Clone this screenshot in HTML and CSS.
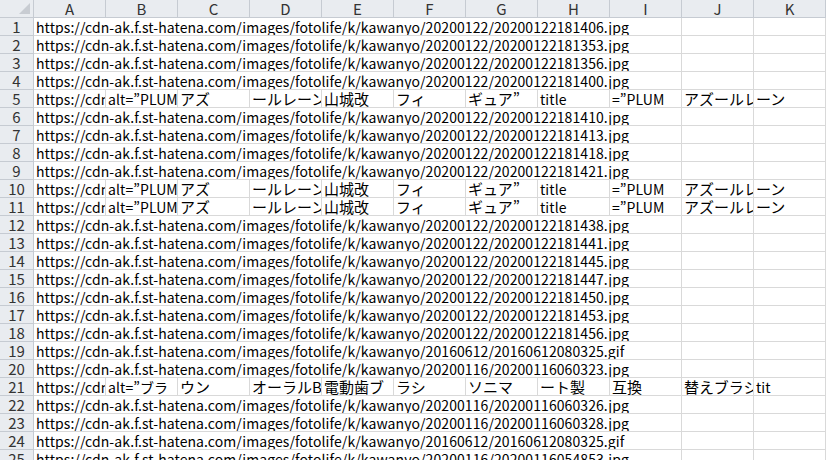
FILE: index.html
```html
<!DOCTYPE html>
<html lang="ja">
<head>
<meta charset="utf-8">
<title>Sheet</title>
<link rel="stylesheet" href="styles.css">
</head>
<body>
<div class="sheet">
  <div class="hd corner"><span class="tri"></span></div>
  <div class="hd col">A</div><div class="hd col">B</div><div class="hd col">C</div><div class="hd col">D</div><div class="hd col">E</div><div class="hd col">F</div><div class="hd col">G</div><div class="hd col">H</div><div class="hd col">I</div><div class="hd col">J</div><div class="hd col">K</div>

  <div class="hd rn">1</div><div class="c url">https://cdn-ak.f.st-hatena.com/images/fotolife/k/kawanyo/20200122/20200122181406.jpg</div><div class="c"></div><div class="c"></div>
  <div class="hd rn">2</div><div class="c url">https://cdn-ak.f.st-hatena.com/images/fotolife/k/kawanyo/20200122/20200122181353.jpg</div><div class="c"></div><div class="c"></div>
  <div class="hd rn">3</div><div class="c url">https://cdn-ak.f.st-hatena.com/images/fotolife/k/kawanyo/20200122/20200122181356.jpg</div><div class="c"></div><div class="c"></div>
  <div class="hd rn">4</div><div class="c url">https://cdn-ak.f.st-hatena.com/images/fotolife/k/kawanyo/20200122/20200122181400.jpg</div><div class="c"></div><div class="c"></div>
  <div class="hd rn">5</div><div class="c">https://cdn-ak.f.st-hatena.com/</div><div class="c">alt=”PLUM</div><div class="c jp">アズ</div><div class="c jp">ールレーン</div><div class="c jp">山城改</div><div class="c jp">フィ</div><div class="c jp">ギュア”</div><div class="c">title</div><div class="c">=”PLUM</div><div class="c jp">アズールレ</div><div class="c jp">ーン</div>
  <div class="hd rn">6</div><div class="c url">https://cdn-ak.f.st-hatena.com/images/fotolife/k/kawanyo/20200122/20200122181410.jpg</div><div class="c"></div><div class="c"></div>
  <div class="hd rn">7</div><div class="c url">https://cdn-ak.f.st-hatena.com/images/fotolife/k/kawanyo/20200122/20200122181413.jpg</div><div class="c"></div><div class="c"></div>
  <div class="hd rn">8</div><div class="c url">https://cdn-ak.f.st-hatena.com/images/fotolife/k/kawanyo/20200122/20200122181418.jpg</div><div class="c"></div><div class="c"></div>
  <div class="hd rn">9</div><div class="c url">https://cdn-ak.f.st-hatena.com/images/fotolife/k/kawanyo/20200122/20200122181421.jpg</div><div class="c"></div><div class="c"></div>
  <div class="hd rn">10</div><div class="c">https://cdn-ak.f.st-hatena.com/</div><div class="c">alt=”PLUM</div><div class="c jp">アズ</div><div class="c jp">ールレーン</div><div class="c jp">山城改</div><div class="c jp">フィ</div><div class="c jp">ギュア”</div><div class="c">title</div><div class="c">=”PLUM</div><div class="c jp">アズールレ</div><div class="c jp">ーン</div>
  <div class="hd rn">11</div><div class="c">https://cdn-ak.f.st-hatena.com/</div><div class="c">alt=”PLUM</div><div class="c jp">アズ</div><div class="c jp">ールレーン</div><div class="c jp">山城改</div><div class="c jp">フィ</div><div class="c jp">ギュア”</div><div class="c">title</div><div class="c">=”PLUM</div><div class="c jp">アズールレ</div><div class="c jp">ーン</div>
  <div class="hd rn">12</div><div class="c url">https://cdn-ak.f.st-hatena.com/images/fotolife/k/kawanyo/20200122/20200122181438.jpg</div><div class="c"></div><div class="c"></div>
  <div class="hd rn">13</div><div class="c url">https://cdn-ak.f.st-hatena.com/images/fotolife/k/kawanyo/20200122/20200122181441.jpg</div><div class="c"></div><div class="c"></div>
  <div class="hd rn">14</div><div class="c url">https://cdn-ak.f.st-hatena.com/images/fotolife/k/kawanyo/20200122/20200122181445.jpg</div><div class="c"></div><div class="c"></div>
  <div class="hd rn">15</div><div class="c url">https://cdn-ak.f.st-hatena.com/images/fotolife/k/kawanyo/20200122/20200122181447.jpg</div><div class="c"></div><div class="c"></div>
  <div class="hd rn">16</div><div class="c url">https://cdn-ak.f.st-hatena.com/images/fotolife/k/kawanyo/20200122/20200122181450.jpg</div><div class="c"></div><div class="c"></div>
  <div class="hd rn">17</div><div class="c url">https://cdn-ak.f.st-hatena.com/images/fotolife/k/kawanyo/20200122/20200122181453.jpg</div><div class="c"></div><div class="c"></div>
  <div class="hd rn">18</div><div class="c url">https://cdn-ak.f.st-hatena.com/images/fotolife/k/kawanyo/20200122/20200122181456.jpg</div><div class="c"></div><div class="c"></div>
  <div class="hd rn">19</div><div class="c url">https://cdn-ak.f.st-hatena.com/images/fotolife/k/kawanyo/20160612/20160612080325.gif</div><div class="c"></div><div class="c"></div>
  <div class="hd rn">20</div><div class="c url">https://cdn-ak.f.st-hatena.com/images/fotolife/k/kawanyo/20200116/20200116060323.jpg</div><div class="c"></div><div class="c"></div>
  <div class="hd rn">21</div><div class="c">https://cdn-ak.f.st-hatena.com/</div><div class="c">alt=”ブラ</div><div class="c jp">ウン</div><div class="c jp">オーラルB</div><div class="c jp">電動歯ブ</div><div class="c jp">ラシ</div><div class="c jp">ソニマ</div><div class="c jp">ート製</div><div class="c jp">互換</div><div class="c jp">替えブラシ”</div><div class="c">tit</div>
  <div class="hd rn">22</div><div class="c url">https://cdn-ak.f.st-hatena.com/images/fotolife/k/kawanyo/20200116/20200116060326.jpg</div><div class="c"></div><div class="c"></div>
  <div class="hd rn">23</div><div class="c url">https://cdn-ak.f.st-hatena.com/images/fotolife/k/kawanyo/20200116/20200116060328.jpg</div><div class="c"></div><div class="c"></div>
  <div class="hd rn">24</div><div class="c url">https://cdn-ak.f.st-hatena.com/images/fotolife/k/kawanyo/20160612/20160612080325.gif</div><div class="c"></div><div class="c"></div>
  <div class="hd rn">25</div><div class="c url">https://cdn-ak.f.st-hatena.com/images/fotolife/k/kawanyo/20200116/20200116054853.jpg</div><div class="c"></div><div class="c"></div>
</div>
</body>
</html>
```

FILE: styles.css
```css
html, body {
  margin: 0;
  padding: 0;
  background: #ffffff;
  overflow: hidden;
}
body {
  width: 826px;
  height: 460px;
}
.sheet {
  display: grid;
  grid-template-columns: 34px repeat(11, 72px);
  grid-auto-rows: 18px;
  font-family: "Noto Sans CJK JP", sans-serif;
  font-size: 14px;
  letter-spacing: 0.08px;
  color: #000;
}
.hd {
  background: #e9ecf0;
  border-right: 1px solid #c6cbd2;
  border-bottom: 1px solid #c6cbd2;
  color: #333;
  text-align: center;
  line-height: 17px;
  font-size: 15px;
  letter-spacing: 0;
  box-sizing: border-box;
}
.corner {
  position: relative;
}
.tri {
  position: absolute;
  right: 3px;
  bottom: 3px;
  width: 0;
  height: 0;
  border-left: 11px solid transparent;
  border-bottom: 11px solid #c8ccd2;
}
.c {
  border-right: 1px solid #d9d9d9;
  border-bottom: 1px solid #d9d9d9;
  box-sizing: border-box;
  white-space: nowrap;
  overflow: hidden;
  padding-left: 2px;
  line-height: 18px;
}
.jp {
  font-size: 15px;
  letter-spacing: 0;
}
.url {
  grid-column: span 9;
}
```
